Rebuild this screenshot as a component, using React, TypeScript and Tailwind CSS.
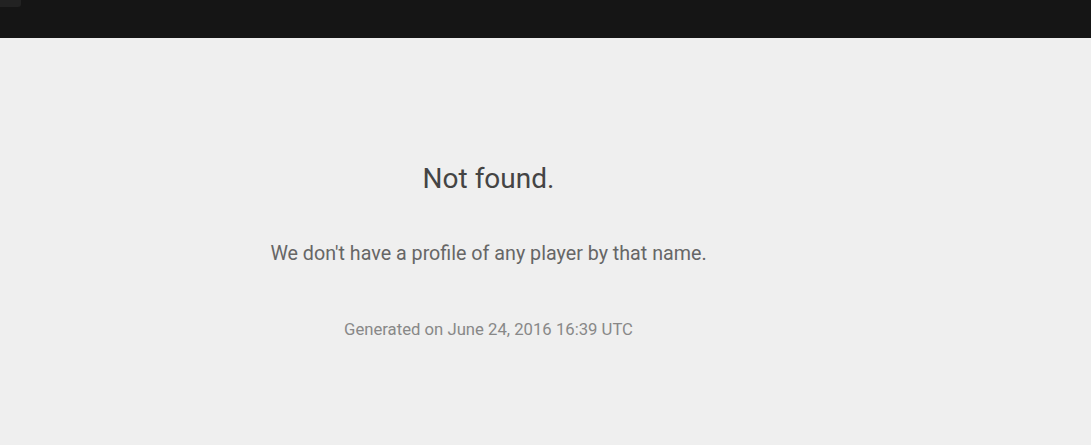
export default function App() {
  return (
    <div className="min-h-[445px] bg-[#efefef] font-['Roboto',sans-serif]">
      <header className="h-[38px] bg-[#151515]">
        <div className="h-[7px] w-[21px] rounded-br-[3px] bg-[#222222]" />
      </header>
      <main className="w-[977px] pt-[124px] text-center">
        <h1 className="text-[28px] leading-[34px] text-[#444444]">Not found.</h1>
        <p className="mt-[45px] text-[19.7px] leading-[26px] text-[#666666]">
          We don't have a profile of any player by that name.
        </p>
        <p className="mt-[53px] text-[16.7px] leading-[20px] text-[#888888]">
          Generated on June 24, 2016 16:39 UTC
        </p>
      </main>
    </div>
  );
}
